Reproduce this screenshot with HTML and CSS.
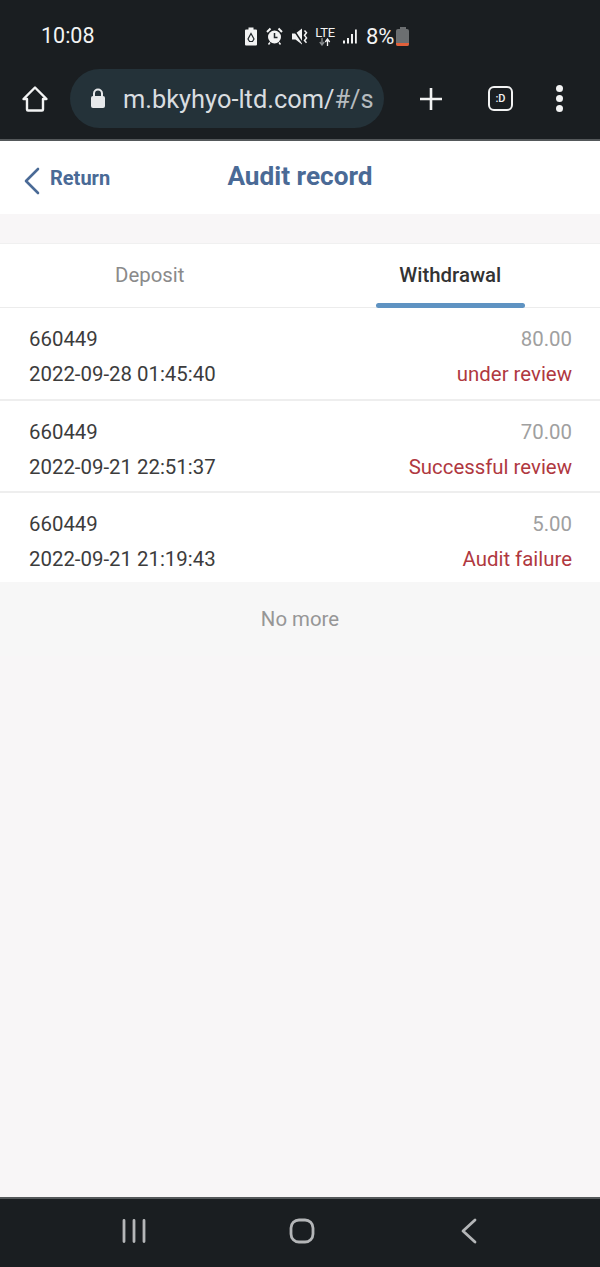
FILE: index.html
```html
<!DOCTYPE html>
<html lang="en">
<head>
    <meta charset="UTF-8">
    <meta name="viewport" content="width=device-width, initial-scale=1.0">
    <title>Audit record</title>
    <link rel="stylesheet" href="styles.css">
</head>
<body>
    <div class="phone">
        <div class="chrome">
            <div class="status-bar">
                <span class="clock">10:08</span>
                <div class="status-icons">
                    <svg class="ic-saver" width="14" height="19" viewBox="0 0 14 19"><path d="M4.500 .5h5v2H12a1 1 0 0 1 1 1v14a1 1 0 0 1-1 1H2a1 1 0 0 1-1-1v-14a1 1 0 0 1 1-1h2.500z" fill="#f2f3f3"/><path d="M7 6.500 10 12 8.500 14.500H5.500L4 12z" fill="none" stroke="#20262a" stroke-width="1.200"/></svg>
                    <svg class="ic-alarm" width="17" height="18" viewBox="0 0 17 18"><circle cx="8.500" cy="10" r="6.500" fill="#f2f3f3"/><path d="M8.500 6v4.500h3" fill="none" stroke="#20262a" stroke-width="1.500"/><path d="M1 5 4.500 1.500M16 5l-3.500-3.500" stroke="#f2f3f3" stroke-width="2"/><path d="M4 15.500 2.500 17.500M13 15.500l1.500 2" stroke="#f2f3f3" stroke-width="1.500"/></svg>
                    <svg class="ic-mute" width="16" height="17" viewBox="0 0 16 17"><path d="M0 5.500h3.500L10 .5v16L3.500 11.500H0z" fill="#f2f3f3"/><path d="M1.500 1.500l9 13.500" stroke="#1a1e21" stroke-width="1.400"/><path d="M12.500 2.500l2 2.200-2 2.600 2 2.600-2 2.600 2 2.200" fill="none" stroke="#f2f3f3" stroke-width="1.500"/></svg>
                    <div class="lte">
                        <span class="lte-text">LTE</span>
                        <svg width="16" height="8" viewBox="0 0 16 8"><path d="M5 0v6M2.800 4 5 7l2.200-3" fill="none" stroke="#8b8f92" stroke-width="1.300"/><path d="M10.500 8V1.500M8.300 4l2.200-3 2.200 3" fill="none" stroke="#f2f3f3" stroke-width="1.300"/></svg>
                    </div>
                    <svg class="ic-signal" width="15" height="15" viewBox="0 0 15 15"><path d="M1 11.500h2v3H1zM5 9h2v5.500H5zM9 5h2v9.500H9zM13 .5h1.800v14H13z" fill="#f2f3f3"/></svg>
                    <span class="percent">8%</span>
                    <div class="battery">
                        <div class="battery-nub"></div>
                        <div class="battery-body"><div class="battery-low"></div></div>
                    </div>
                </div>
            </div>
            <div class="toolbar">
                <svg class="ic-home" width="28" height="28" viewBox="0 0 28 28"><path d="M2.500 14 14 2.500 25.500 14H22v10.500a1 1 0 0 1-1 1H7a1 1 0 0 1-1-1V14z" fill="none" stroke="#f2f3f3" stroke-width="2.400" stroke-linejoin="round"/></svg>
                <div class="url-pill">
                    <svg width="16" height="21" viewBox="0 0 16 21"><path d="M4 9V5.500a4 4 0 0 1 8 0V9" fill="none" stroke="#e6e8ea" stroke-width="2"/><rect x="1" y="8" width="14" height="12" rx="2" fill="#e6e8ea"/></svg>
                    <span class="url">m.bkyhyo-ltd.com/<span class="url-dim">#/s</span></span>
                </div>
                <svg class="ic-plus" width="24" height="24" viewBox="0 0 24 24"><path d="M12 1v22M1 12h22" stroke="#f2f3f3" stroke-width="2.600"/></svg>
                <div class="tab-count">:D</div>
                <div class="menu-dots"><span></span><span></span><span></span></div>
            </div>
        </div>

        <div class="page">
            <header class="page-head">
                <div class="back">
                    <svg width="17" height="28" viewBox="0 0 17 28"><path d="M15 2 3 14l12 12" fill="none" stroke="#4a6a96" stroke-width="2.600" stroke-linecap="round" stroke-linejoin="round"/></svg>
                    <span>Return</span>
                </div>
                <h1>Audit record</h1>
            </header>

            <nav class="tabs">
                <div class="tab">Deposit</div>
                <div class="tab active">Withdrawal</div>
            </nav>

            <div class="records">
                <div class="record">
                    <div class="line"><span>660449</span><span class="amount">80.00</span></div>
                    <div class="line"><span>2022-09-28 01:45:40</span><span class="state">under review</span></div>
                </div>
                <div class="record">
                    <div class="line"><span>660449</span><span class="amount">70.00</span></div>
                    <div class="line"><span>2022-09-21 22:51:37</span><span class="state">Successful review</span></div>
                </div>
                <div class="record">
                    <div class="line"><span>660449</span><span class="amount">5.00</span></div>
                    <div class="line"><span>2022-09-21 21:19:43</span><span class="state">Audit failure</span></div>
                </div>
            </div>

            <div class="no-more">No more</div>
        </div>

        <div class="nav-bar">
            <svg width="26" height="24" viewBox="0 0 26 24"><path d="M3 1.500v21M13 1.500v21M23 1.500v21" stroke="#b4b6b8" stroke-width="2.800" stroke-linecap="round"/></svg>
            <svg width="26" height="26" viewBox="0 0 26 26"><rect x="2" y="2" width="22" height="22" rx="8" fill="none" stroke="#b4b6b8" stroke-width="2.800"/></svg>
            <svg class="nav-back" width="18" height="26" viewBox="0 0 18 26"><path d="M15 2 3 13l12 11" fill="none" stroke="#b4b6b8" stroke-width="2.800" stroke-linecap="round" stroke-linejoin="round"/></svg>
        </div>
    </div>
</body>
</html>
```

FILE: styles.css
```css
/* Page frame */
html, body {
    margin: 0;
    padding: 0;
}

body {
    font-family: Roboto, "Liberation Sans", sans-serif;
    background-color: #f8f6f7;
}

.phone {
    display: flex;
    flex-direction: column;
    height: 1267px;
    overflow: hidden;
}

/* Browser chrome */
.chrome {
    height: 139px;
    background-color: #1a1e21;
    border-bottom: 2px solid #54585a;
    flex: none;
}

.status-bar {
    height: 64px;
    position: relative;
    color: #f2f3f3;
}

.clock {
    position: absolute;
    left: 41px;
    top: 23px;
    font-size: 21.5px;
    line-height: 25px;
}

.status-icons {
    position: absolute;
    left: 244px;
    top: 26px;
    display: flex;
    align-items: center;
    height: 20px;
}

.ic-alarm { margin-left: 8px; }
.ic-mute { margin-left: 9px; }
.ic-signal { margin-left: 7px; }

.lte {
    display: flex;
    flex-direction: column;
    align-items: center;
    margin-left: 7px;
    width: 20px;
}

.lte-text {
    font-size: 13px;
    line-height: 11px;
    letter-spacing: -0.3px;
}

.percent {
    margin-left: 9px;
    font-size: 22px;
    line-height: 25px;
}

.battery {
    margin-left: 2px;
    display: flex;
    flex-direction: column;
    align-items: center;
}

.battery-nub {
    width: 6px;
    height: 2px;
    background-color: #6c6f71;
}

.battery-body {
    width: 13px;
    height: 17px;
    background-color: #6c6f71;
    border-radius: 2px;
    display: flex;
    align-items: flex-end;
    overflow: hidden;
}

.battery-low {
    width: 100%;
    height: 3px;
    background-color: #e2603a;
}

.toolbar {
    height: 69px;
    display: flex;
    align-items: center;
}

.ic-home {
    margin-left: 21px;
    flex: none;
}

.url-pill {
    width: 314px;
    height: 59px;
    margin-left: 21px;
    padding-left: 20px;
    box-sizing: border-box;
    background-color: #243239;
    border-radius: 30px;
    display: flex;
    align-items: center;
    gap: 17px;
    flex: none;
    overflow: hidden;
}

.url {
    font-size: 25.4px;
    color: #d9dde0;
    white-space: nowrap;
}

.url-dim { color: #b5bbbf; }

.ic-plus {
    margin-left: 35px;
    flex: none;
}

.tab-count {
    width: 21px;
    height: 21px;
    margin-left: 45px;
    border: 2.5px solid #f2f3f3;
    border-radius: 6px;
    color: #f2f3f3;
    font-size: 11px;
    font-weight: 500;
    display: flex;
    align-items: center;
    justify-content: center;
    flex: none;
}

.menu-dots {
    margin-left: 43px;
    display: flex;
    flex-direction: column;
    gap: 3px;
}

.menu-dots span {
    width: 7px;
    height: 7px;
    border-radius: 50%;
    background-color: #f2f3f3;
}

/* Page content */
.page {
    flex: 1;
    display: flex;
    flex-direction: column;
}

.page-head {
    height: 73px;
    background-color: #fff;
    display: flex;
    align-items: center;
    justify-content: center;
    position: relative;
    flex: none;
}

.page-head h1 {
    margin: 0;
    font-size: 26.2px;
    font-weight: 700;
    color: #4a6a96;
    position: relative;
    top: -2px;
}

.back {
    position: absolute;
    left: 23px;
    top: 26px;
    display: flex;
    align-items: flex-start;
    gap: 10px;
    color: #4a6a96;
    font-size: 20px;
    font-weight: 700;
    line-height: 22px;
}

.tabs {
    margin-top: 29px;
    height: 63px;
    background-color: #fff;
    border-top: 1px solid #f0f0f0;
    border-bottom: 1px solid #ececec;
    display: flex;
    flex: none;
}

.tab {
    flex: 1;
    display: flex;
    align-items: center;
    justify-content: center;
    font-size: 20.4px;
    color: #8a8a8a;
    position: relative;
    padding-bottom: 1px;
}

.tab.active {
    color: #333;
    font-weight: 500;
    padding-left: 1px;
}

.tab.active::after {
    content: "";
    position: absolute;
    left: 76px;
    width: 149px;
    bottom: -1px;
    height: 5px;
    border-radius: 3px;
    background-color: #5f93c2;
}

.record {
    background-color: #fff;
    height: 92px;
    padding: 14px 28px 0 29px;
    box-sizing: border-box;
    border-bottom: 2px solid #eeeeee;
}

.record:first-child {
    height: 93px;
}

.record:last-child {
    height: 89px;
    border-bottom: none;
}

.line {
    display: flex;
    justify-content: space-between;
    font-size: 20.4px;
    line-height: 35px;
    color: #3c3c3c;
}

.amount { color: #a0a0a0; }
.state { color: #b0383f; }

.no-more {
    background-color: #f7f7f7;
    height: 74px;
    text-align: center;
    font-size: 20.4px;
    line-height: 74px;
    color: #969696;
}

/* Android nav bar */
.nav-bar {
    height: 70px;
    flex: none;
    background-color: #1a1e21;
    border-top: 2px solid #54585a;
    box-sizing: border-box;
    display: flex;
    align-items: center;
    padding-left: 121px;
    padding-bottom: 5px;
    gap: 142px;
}

.nav-back {
    margin-left: 3px;
}
```
